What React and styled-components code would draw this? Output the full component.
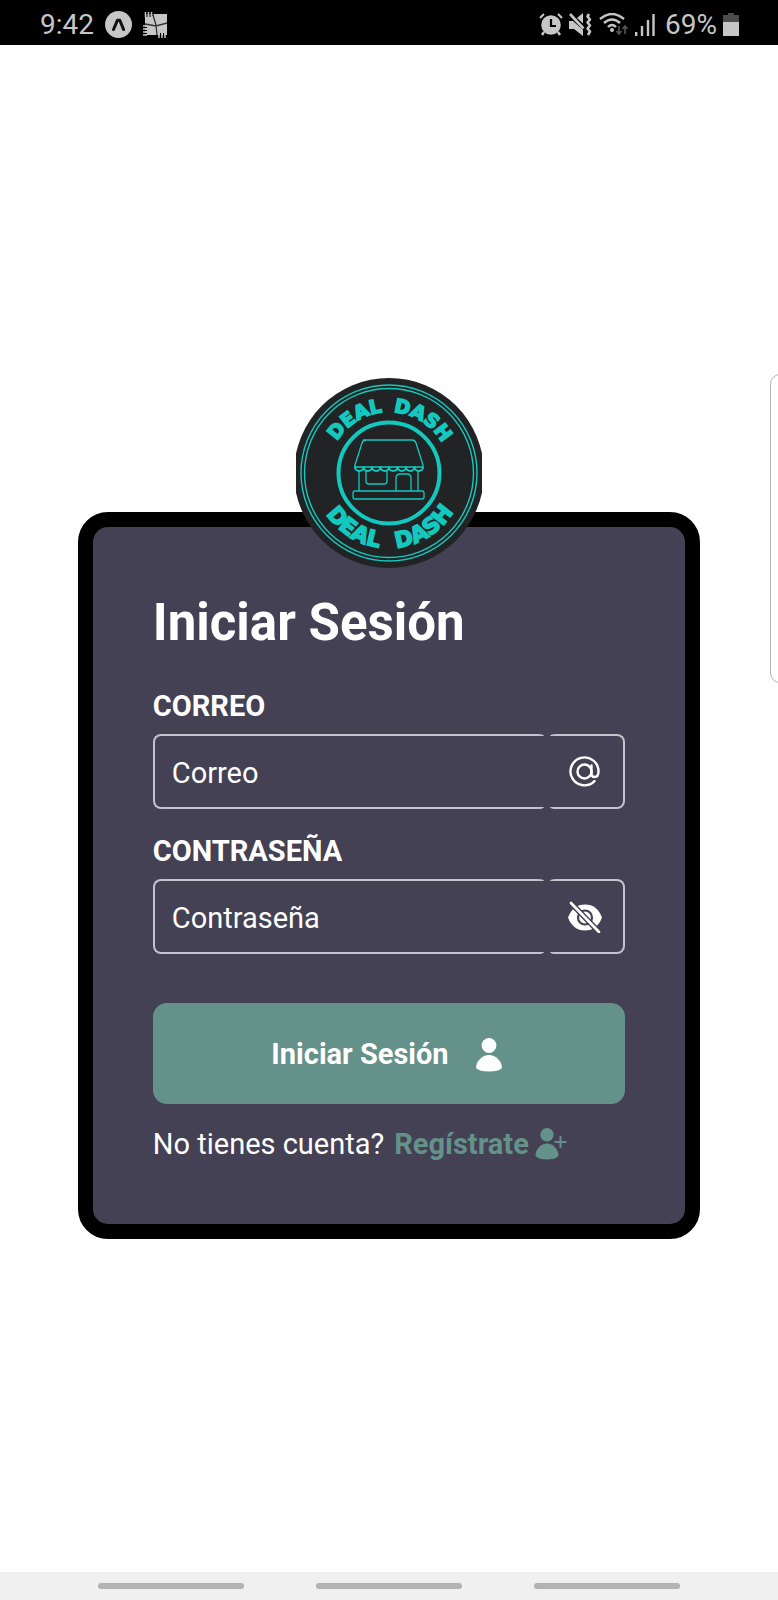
import React, { useState } from "react";
import styled, { createGlobalStyle } from "styled-components";

const ink = "#c6c6c6";
const teal = "#13c9bf";
const green = "#64918a";
const slate = "#434153";

const GlobalStyle = createGlobalStyle`
  * { box-sizing: border-box; }
  body { margin: 0; background: #fff; font-family: Roboto, "Liberation Sans", sans-serif; }
`;

const Screen = styled.div`
  position: relative;
  display: flex;
  flex-direction: column;
  min-height: 100vh;
  overflow: hidden;
`;

const StatusBar = styled.header`
  display: flex;
  align-items: center;
  justify-content: space-between;
  height: 45px;
  padding: 4px 39px 0 40px;
  background: #000;
  color: ${ink};
`;

const StatusGroup = styled.div`
  display: flex;
  align-items: center;
  gap: ${(p) => p.$gap}px;
`;

const StatusIcons = styled.div`
  display: flex;
  align-items: center;
  gap: 6px;
  margin-right: 4px;
`;

const StatusText = styled.span`
  font-size: 28px;
  line-height: 32px;
`;

const Main = styled.main`
  flex: 1;
  display: flex;
  flex-direction: column;
  align-items: center;
  justify-content: center;
`;

const LogoBox = styled.div`
  position: relative;
  z-index: 1;
  margin-bottom: -56px;
  svg { display: block; }
`;

const Card = styled.form`
  width: 80%;
  padding: 65px 60px 62px;
  border: 15px solid #000;
  border-radius: 30px;
  background: ${slate};
  color: #fff;
`;

const Title = styled.h1`
  margin: 0 0 36px;
  font-size: 51px;
  line-height: 61px;
  font-weight: 700;
`;

const Field = styled.div`
  margin-bottom: 25px;
`;

const Label = styled.label`
  display: block;
  margin-bottom: 10px;
  font-size: 29px;
  line-height: 35px;
  font-weight: 700;
`;

const InputGroup = styled.div`
  display: flex;
  gap: 6px;
  height: 75px;
`;

const TextInput = styled.input`
  flex: 1;
  min-width: 0;
  padding: 3px 17px 0;
  border: 2px solid #c4c3cb;
  border-right: 0;
  border-radius: 8px 6px 6px 8px / 8px 2px 2px 8px;
  background: transparent;
  color: #fff;
  font: 400 29px/35px Roboto, "Liberation Sans", sans-serif;
  outline: none;
  &::placeholder { color: #fff; opacity: 1; }
`;

const Addon = styled.div`
  display: flex;
  align-items: center;
  justify-content: center;
  width: 75px;
  padding-right: 4px;
  border: 2px solid #c4c3cb;
  border-left: 0;
  border-radius: 6px 8px 8px 6px / 2px 8px 8px 2px;
`;

const IconButton = styled.button`
  display: flex;
  padding: 0;
  border: 0;
  background: none;
  color: inherit;
  cursor: pointer;
`;

const Submit = styled.button`
  display: flex;
  align-items: center;
  justify-content: center;
  gap: 26px;
  width: 100%;
  height: 101px;
  margin: 49px 0 22px;
  padding: 2px 4px 0 0;
  border: 0;
  border-radius: 14px;
  background: ${green};
  color: #fff;
  font: 700 29px/35px Roboto, "Liberation Sans", sans-serif;
  cursor: pointer;
`;

const Register = styled.p`
  display: flex;
  flex-wrap: wrap;
  align-items: center;
  gap: 10px;
  margin: 0;
  font-size: 29px;
  line-height: 36px;
`;

const RegisterLink = styled.a`
  display: flex;
  align-items: center;
  gap: 6px;
  color: ${green};
  font-weight: 700;
  text-decoration: none;
`;

const EdgePanel = styled.aside`
  position: absolute;
  top: 374px;
  right: -12px;
  width: 20px;
  height: 309px;
  border: 1px solid #b0b0b0;
  border-radius: 10px;
`;

const NavBar = styled.nav`
  display: flex;
  align-items: center;
  justify-content: center;
  gap: 72px;
  height: 28px;
  background: #f0f0f0;
`;

const NavPill = styled.button`
  width: 146px;
  height: 6px;
  padding: 0;
  border: 0;
  border-radius: 3px;
  background: #b3b3b3;
`;

const ExpoIcon = () => (
  <svg width="27" height="27" viewBox="0 0 27 27">
    <circle cx="13.500" cy="13.500" r="13.500" fill={ink} />
    <path d="M8.500 18.500 L12.400 9.300 H14.800 L18.600 18.500" fill="none" stroke="#111" strokeWidth="3" strokeLinecap="round" strokeLinejoin="round" />
  </svg>
);

const PatchIcon = () => (
  <svg width="25" height="26" viewBox="2 0 25 26">
    <path d="M4 2H26V23H4Z" fill={ink} />
    <path d="M4.500 0V5M7.500 0V5M10.500 0V5M2 14H6M2 17H6M2 20H6M2 23H6M18 20V26M21 20V26M24 20V26" stroke={ink} strokeWidth="1.500" />
    <path d="M6 1V5M9 1V5M12 1V4M3 15.500H6M3 18.500H6M3 21.500H6M19.500 21V26M22.500 21V26" stroke="#000" strokeWidth="1" />
    <path d="M12 3L15 13L16 23M4 12L15 14L26 11" fill="none" stroke="#333" strokeWidth="1.300" />
  </svg>
);

const AlarmIcon = () => (
  <svg width="24" height="23" viewBox="0 0 24 23">
    <circle cx="12" cy="12" r="9.800" fill={ink} />
    <path d="M1 5L5 1M23 5L19 1" stroke={ink} strokeWidth="2" />
    <path d="M5 19L3 22M19 19L21 22" stroke={ink} strokeWidth="2.500" />
    <path d="M12 6V13H17" stroke="#000" strokeWidth="2.200" fill="none" />
  </svg>
);

const MuteIcon = () => (
  <svg width="24" height="23" viewBox="0 0 24 23">
    <path d="M0 8H4L14 17V23L5 16H0ZM8 5L14 0V10.500Z" fill={ink} />
    <path d="M1 1L14.500 15.500" stroke={ink} strokeWidth="2.600" />
    <path d="M20 1L18.500 3.500L21 6.500L18.500 9.500L21 12.500L18.500 15.500L21 18.500L19 22" fill="none" stroke={ink} strokeWidth="2.600" strokeLinejoin="round" />
  </svg>
);

const WifiIcon = () => (
  <svg width="30" height="23" viewBox="0 0 30 23">
    <path d="M1 6Q13 -4 25 6M5 10Q13 3 21 10M9 14Q13 10 17 14" fill="none" stroke={ink} strokeWidth="2.400" />
    <circle cx="13" cy="17" r="2" fill={ink} />
    <path d="M20 13V20M17.500 18L20 21L22.500 18M26 21V14M23.500 16L26 13L28.500 16" fill="none" stroke="#555" strokeWidth="1.600" />
  </svg>
);

const SignalIcon = () => (
  <svg width="20" height="22" viewBox="0 0 20 22">
    <path d="M1.200 22V18M7 22V12M13 22V6M18.500 22V0" stroke={ink} strokeWidth="2.400" />
  </svg>
);

const BatteryIcon = () => (
  <svg width="16" height="23" viewBox="0 0 16 23">
    <path d="M5 0H11V2H16V9H0V2H5Z" fill="#4c4c4c" />
    <path d="M0 9H16V23H0Z" fill={ink} />
  </svg>
);

const AtIcon = () => (
  <svg width="31" height="31" viewBox="0 0 31 31" fill="none" stroke="#fff" strokeWidth="2.400" strokeLinecap="round">
    <circle cx="15.500" cy="15.500" r="7" />
    <path d="M22.500 9.500V17.500Q22.500 21 25.500 21Q29.500 21 29.500 15.500A14 14 0 1 0 25.500 25.200" />
  </svg>
);

const EyeOffIcon = () => (
  <svg width="34" height="32" viewBox="0 0 34 32">
    <path d="M0 16.500Q5 3.500 17 3.500T34 16.500Q29 29.500 17 29.500T0 16.500Z" fill="#fff" />
    <circle cx="17" cy="16.500" r="7" fill="none" stroke={slate} strokeWidth="2.200" />
    <path d="M2 1L31 31" stroke={slate} strokeWidth="5.500" />
    <path d="M3 2L31 31" stroke="#fff" strokeWidth="2.600" strokeLinecap="round" />
  </svg>
);

const PersonIcon = () => (
  <svg width="28" height="34" viewBox="0 0 28 34" fill="#fff">
    <circle cx="14" cy="7.500" r="7.400" />
    <path d="M14 17C20.500 17 27 23 27 30Q24 33.500 14 33.500T1 30C1 23 7.500 17 14 17Z" />
  </svg>
);

const PersonAddIcon = () => (
  <svg width="32" height="32" viewBox="0 0 32 32" fill={green}>
    <circle cx="12" cy="6.700" r="6.700" />
    <path d="M12 15.500C18 15.500 23.500 21 23.500 28Q20 31.500 12 31.500T0.500 28C0.500 21 6 15.500 12 15.500Z" />
    <path d="M25.500 8V20M19.500 14H31.500" stroke={green} strokeWidth="2" />
  </svg>
);

const Logo = () => (
  <svg width="186" height="190" viewBox="-93 -95 186 190" role="img" aria-label="Deal Dash">
    <defs>
      <path id="arcTop" d="M-61 0A61 61 0 0 1 61 0" />
      <path id="arcBottom" d="M-75 0A75 75 0 0 0 75 0" />
    </defs>
    <circle r="95" fill="#222324" />
    <g fill="none" stroke={teal}>
      <circle r="88" strokeWidth="1.400" />
      <circle r="84.500" strokeWidth="1.400" />
      <circle r="50.500" strokeWidth="4" />
      <g strokeWidth="1.300" strokeLinejoin="round">
        <path d="M-26 -33H23Q26 -33 27 -30L34 -8V-6H-34V-8L-27 -30Q-26 -33 -23 -33" />
        <path d="M-34 -7v1a4.250 4 0 0 0 8.500 0a4.250 4 0 0 0 8.500 0a4.250 4 0 0 0 8.500 0a4.250 4 0 0 0 8.500 0a4.250 4 0 0 0 8.500 0a4.250 4 0 0 0 8.500 0a4.250 4 0 0 0 8.500 0a4.250 4 0 0 0 8.500 0" strokeWidth="2" />
        <path d="M-30 -2V18M29 -2V18M-23 -2V8Q-23 11 -20 11H-5Q-2 11 -2 8V-2M7 18V5Q7 1 11 1H18Q22 1 22 5V18" />
        <rect x="-36" y="18" width="71" height="8" rx="2" />
      </g>
    </g>
    <g fill={teal} stroke={teal} strokeWidth="1.600" fontFamily="DejaVu Sans" fontWeight="700" textAnchor="middle">
      <g fontSize="19">
        <text><textPath href="#arcTop" startOffset="32%">DEAL</textPath></text>
        <text><textPath href="#arcTop" startOffset="68%">DASH</textPath></text>
      </g>
      <g fontSize="22">
        <text><textPath href="#arcBottom" startOffset="32%">DEAL</textPath></text>
        <text><textPath href="#arcBottom" startOffset="68%">DASH</textPath></text>
      </g>
    </g>
  </svg>
);

export default function App() {
  const [hidden, setHidden] = useState(true);
  return (
    <Screen>
      <GlobalStyle />
      <StatusBar>
        <StatusGroup $gap={11}>
          <StatusText as="time">9:42</StatusText>
          <ExpoIcon />
          <PatchIcon />
        </StatusGroup>
        <StatusGroup $gap={6}>
          <StatusIcons>
            <AlarmIcon />
            <MuteIcon />
            <WifiIcon />
            <SignalIcon />
          </StatusIcons>
          <StatusText>69%</StatusText>
          <BatteryIcon />
        </StatusGroup>
      </StatusBar>
      <Main>
        <LogoBox><Logo /></LogoBox>
        <Card onSubmit={(e) => e.preventDefault()}>
          <Title>Iniciar Sesión</Title>
          <Field>
            <Label htmlFor="email">CORREO</Label>
            <InputGroup>
              <TextInput id="email" type="email" placeholder="Correo" />
              <Addon><AtIcon /></Addon>
            </InputGroup>
          </Field>
          <Field>
            <Label htmlFor="password">CONTRASEÑA</Label>
            <InputGroup>
              <TextInput id="password" type={hidden ? "password" : "text"} placeholder="Contraseña" />
              <Addon>
                <IconButton type="button" aria-label="Mostrar contraseña" onClick={() => setHidden(!hidden)}>
                  <EyeOffIcon />
                </IconButton>
              </Addon>
            </InputGroup>
          </Field>
          <Submit type="submit">Iniciar Sesión <PersonIcon /></Submit>
          <Register>
            No tienes cuenta?
            <RegisterLink href="#registro">Regístrate<PersonAddIcon /></RegisterLink>
          </Register>
        </Card>
      </Main>
      <EdgePanel />
      <NavBar>
        <NavPill type="button" aria-label="Recientes" />
        <NavPill type="button" aria-label="Inicio" />
        <NavPill type="button" aria-label="Atrás" />
      </NavBar>
    </Screen>
  );
}
